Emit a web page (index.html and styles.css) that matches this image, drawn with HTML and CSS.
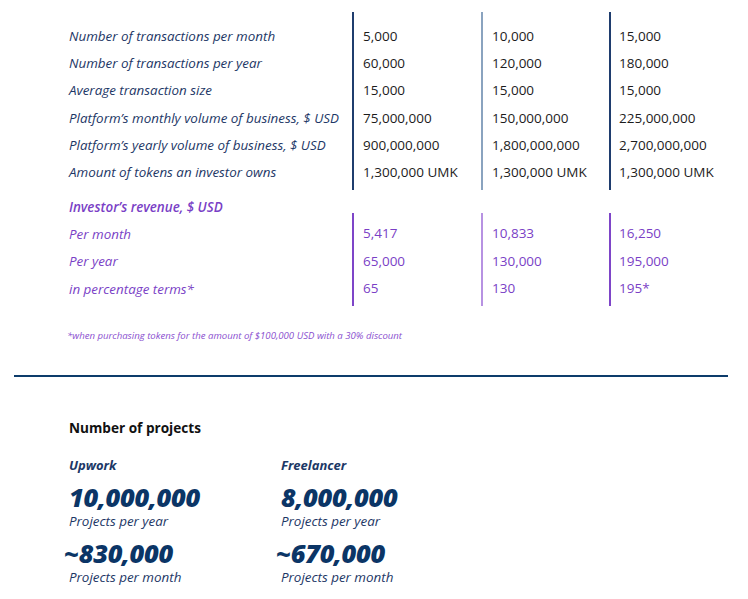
FILE: index.html
```html
<!DOCTYPE html>
<html>
<head>
<meta charset="utf-8">
<link rel="stylesheet" href="styles.css">
</head>
<body>
<div class="page">
  <section class="block block-top">
    <div class="col col-label">
      <div class="cell">Number of transactions per month</div>
      <div class="cell">Number of transactions per year</div>
      <div class="cell">Average transaction size</div>
      <div class="cell">Platform’s monthly volume of business, $ USD</div>
      <div class="cell">Platform’s yearly volume of business, $ USD</div>
      <div class="cell">Amount of tokens an investor owns</div>
    </div>
    <div class="col col-val c1 line-dark">
      <div class="cell">5,000</div>
      <div class="cell">60,000</div>
      <div class="cell">15,000</div>
      <div class="cell">75,000,000</div>
      <div class="cell">900,000,000</div>
      <div class="cell">1,300,000 UMK</div>
    </div>
    <div class="col col-val c2 line-light">
      <div class="cell">10,000</div>
      <div class="cell">120,000</div>
      <div class="cell">15,000</div>
      <div class="cell">150,000,000</div>
      <div class="cell">1,800,000,000</div>
      <div class="cell">1,300,000 UMK</div>
    </div>
    <div class="col col-val c3 line-dark">
      <div class="cell">15,000</div>
      <div class="cell">180,000</div>
      <div class="cell">15,000</div>
      <div class="cell">225,000,000</div>
      <div class="cell">2,700,000,000</div>
      <div class="cell">1,300,000 UMK</div>
    </div>
  </section>

  <section class="block block-purple">
    <div class="col col-label purple">
      <div class="cell head">Investor’s revenue, $ USD</div>
      <div class="cell">Per month</div>
      <div class="cell">Per year</div>
      <div class="cell">in percentage terms*</div>
    </div>
    <div class="col col-val c1 pv line-purple">
      <div class="cell">5,417</div>
      <div class="cell">65,000</div>
      <div class="cell">65</div>
    </div>
    <div class="col col-val c2 pv line-purple-light">
      <div class="cell">10,833</div>
      <div class="cell">130,000</div>
      <div class="cell">130</div>
    </div>
    <div class="col col-val c3 pv line-purple">
      <div class="cell">16,250</div>
      <div class="cell">195,000</div>
      <div class="cell">195*</div>
    </div>
  </section>

  <p class="footnote">*when purchasing tokens for the amount of $100,000 USD with a 30% discount</p>

  <hr class="rule">

  <section class="projects">
    <h2 class="projects-title">Number of projects</h2>
    <div class="platforms">
      <div class="platform">
        <div class="platform-name">Upwork</div>
        <div class="big">10,000,000</div>
        <div class="sub">Projects per year</div>
        <div class="big tilde">~830,000</div>
        <div class="sub">Projects per month</div>
      </div>
      <div class="platform">
        <div class="platform-name">Freelancer</div>
        <div class="big">8,000,000</div>
        <div class="sub">Projects per year</div>
        <div class="big tilde">~670,000</div>
        <div class="sub">Projects per month</div>
      </div>
    </div>
  </section>
</div>
</body>
</html>
```

FILE: styles.css
```css
* { box-sizing: border-box; }
html, body { margin: 0; padding: 0; background: #fff; }
body {
  font-family: "Open Sans", "Noto Sans", sans-serif;
  color: #1c1c1c;
  width: 748px;
  height: 599px;
  overflow: hidden;
}
.page { padding-top: 12px; }

.block { display: flex; align-items: flex-start; }

.col { display: flex; flex-direction: column; }
.cell {
  font-size: 13.5px;
  line-height: 27.4px;
  height: 27.4px;
  white-space: nowrap;
}
.col-label {
  width: 352px;
  padding-left: 69px;
  font-style: italic;
  color: #1d3766;
}
.col-label .cell { font-size: 13.4px; }
.block-top .col { padding-top: 10.5px; padding-bottom: 3.5px; }

.c1 { width: 129px; padding-left: 9px; }
.c2 { width: 128px; padding-left: 9px; }
.c3 { width: 128px; padding-left: 8px; }

.line-dark { border-left: 2px solid #1f3d6e; }
.line-light { border-left: 2px solid #8aa3bf; }

.block-purple { margin-top: 3.3px; }
.col-label.purple { color: #7a3fc6; }
.purple .head { font-weight: 600; }
.pv {
  color: #7a3fc6;
  margin-top: 19.7px;
  padding-top: 7px;
  padding-bottom: 3.5px;
}
.line-purple { border-left: 2px solid #7e45c8; }
.line-purple-light { border-left: 2px solid #b792e2; }

.footnote {
  margin: 24px 0 0 67px;
  font-size: 9.6px;
  line-height: 12px;
  font-style: italic;
  color: #8a4fcf;
}

.rule {
  margin: 33px 0 0 14px;
  width: 714px;
  height: 2px;
  border: 0;
  background: #0d3c6b;
}

.projects { padding-left: 69px; }
.projects-title {
  margin: 41px 0 0 0;
  font-size: 13.6px;
  line-height: 20px;
  font-weight: 700;
  color: #111;
}
.platforms { display: flex; margin-top: 17px; }
.platform { width: 212px; }
.platform-name {
  font-size: 13px;
  line-height: 20px;
  font-weight: 700;
  font-style: italic;
  color: #1c3866;
}
.big {
  margin-top: 10px;
  font-size: 25.5px;
  line-height: 24px;
  font-weight: 800;
  font-style: italic;
  color: #0b3566;
  letter-spacing: -0.3px;
}
.big.tilde { margin-top: 11px; margin-left: -5px; }
.sub {
  margin-top: 3px;
  font-size: 13.4px;
  line-height: 18px;
  font-style: italic;
  color: #1d3766;
}
```
